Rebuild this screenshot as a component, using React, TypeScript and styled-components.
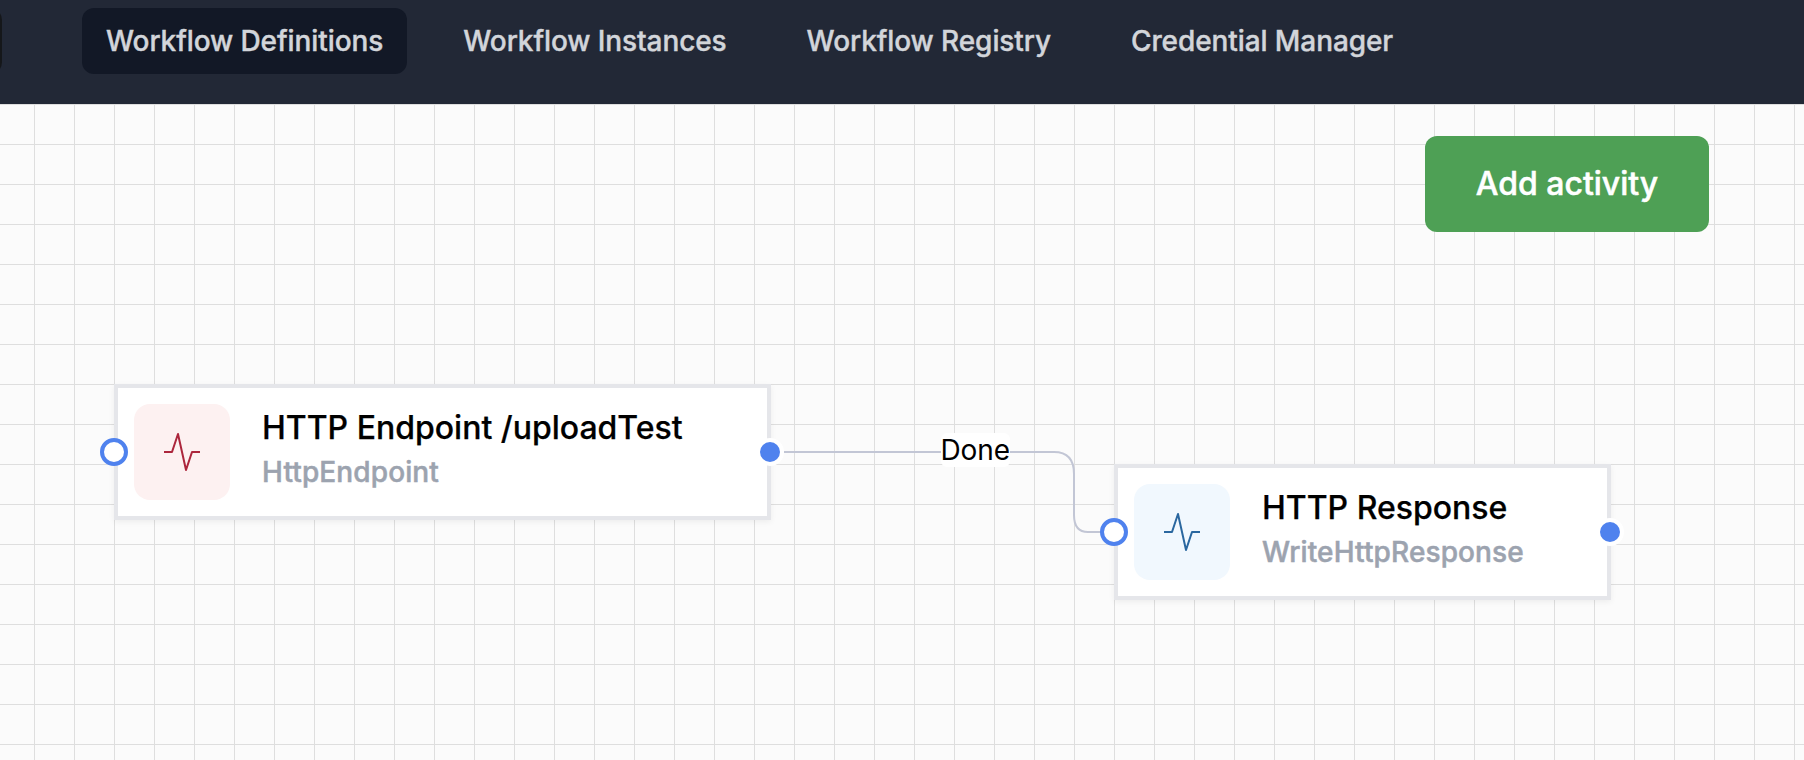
import React from "react";
import styled, { createGlobalStyle } from "styled-components";

const GlobalStyle = createGlobalStyle`
  *, *::before, *::after { box-sizing: border-box; }
  body {
    margin: 0;
    overflow: hidden;
    font-family: Inter, "Liberation Sans", sans-serif;
    -webkit-font-smoothing: antialiased;
  }
`;

const Page = styled.div`
  display: flex;
  flex-direction: column;
  width: 100%;
  height: 100vh;
  overflow: hidden;
`;

const Header = styled.header`
  display: flex;
  flex: none;
  align-items: flex-start;
  height: 104px;
  padding-top: 8px;
  background: #222836;
`;

const LogoTile = styled.div`
  flex: none;
  width: 66px;
  height: 66px;
  margin-left: -64px;
  border-radius: 12px;
  background: #15171a;
`;

const Nav = styled.nav`
  display: flex;
  gap: 32px;
  margin-left: 80px;
`;

const NavItem = styled.a<{ $active?: boolean }>`
  height: 66px;
  padding: 0 24px;
  border-radius: 12px;
  background: ${(p) => (p.$active ? "#121826" : "transparent")};
  color: #d2d5da;
  font-size: 28px;
  font-weight: 500;
  letter-spacing: -0.09px;
  line-height: 66px;
  white-space: nowrap;
  -webkit-text-stroke: 0.4px currentColor;
`;

const Canvas = styled.main`
  position: relative;
  display: flex;
  flex: 1;
  align-items: flex-start;
  justify-content: flex-end;
  padding: 32px 95px 0 0;
  background-color: #fbfbfb;
  background-image:
    linear-gradient(to right, #dedede 1px, transparent 1px),
    linear-gradient(to bottom, #dedede 1px, transparent 1px);
  background-size: 40px 40px;
  background-position: 34px 0;
`;

const AddButton = styled.button`
  width: 284px;
  height: 96px;
  padding: 0;
  border: 0;
  border-radius: 12px;
  background: #4ea055;
  color: #fff;
  font: 500 32px/96px Inter, "Liberation Sans", sans-serif;
  -webkit-text-stroke: 0.5px currentColor;
`;

const Wires = styled.svg`
  position: absolute;
  inset: 0;
  width: 100%;
  height: 100%;
  pointer-events: none;
`;

const WireLabel = styled.span<{ $x: number; $y: number }>`
  position: absolute;
  left: ${(p) => p.$x}px;
  top: ${(p) => p.$y}px;
  height: 34px;
  border-radius: 6px;
  background: #fff;
  color: #000;
  font-size: 28px;
  letter-spacing: -0.1px;
  line-height: 34px;
`;

const Node = styled.section<{ $x: number; $y: number; $w: number }>`
  position: absolute;
  left: ${(p) => p.$x}px;
  top: ${(p) => p.$y}px;
  display: flex;
  gap: 32px;
  width: ${(p) => p.$w}px;
  height: 136px;
  padding: 16px;
  border: 4px solid #e5e6ea;
  background: #fff;
  box-shadow: 0 2px 6px rgba(0, 0, 0, 0.06);
`;

const IconTile = styled.div<{ $bg: string; $fg: string }>`
  display: flex;
  flex: none;
  align-items: center;
  justify-content: center;
  width: 96px;
  height: 96px;
  border-radius: 16px;
  background: ${(p) => p.$bg};
  color: ${(p) => p.$fg};
`;

const NodeText = styled.div`
  display: flex;
  flex-direction: column;
  white-space: nowrap;
`;

const NodeTitle = styled.div`
  color: #000;
  font-size: 32px;
  font-weight: 500;
  line-height: 48px;
  -webkit-text-stroke: 0.25px currentColor;
`;

const NodeType = styled.div`
  color: #9ca3af;
  font-size: 28px;
  font-weight: 500;
  letter-spacing: 0.12px;
  line-height: 40px;
  -webkit-text-stroke: 0.5px currentColor;
`;

const Port = styled.i<{ $side: "in" | "out" }>`
  position: absolute;
  top: 50%;
  ${(p) => (p.$side === "in" ? "left: -18px;" : "right: -17px;")}
  width: 28px;
  height: 28px;
  margin-top: -14px;
  border: 4px solid ${(p) => (p.$side === "in" ? "#4f82ee" : "#fff")};
  border-radius: 50%;
  background: ${(p) => (p.$side === "in" ? "#fff" : "#4f82ee")};
`;

const PulseIcon = () => (
  <svg width="48" height="48" viewBox="0 0 24 24" fill="none" stroke="currentColor" strokeLinejoin="round">
    <path d="M3 12h4l3-9 4 18 3-9h4" />
  </svg>
);

type Activity = {
  title: string;
  type: string;
  x: number;
  y: number;
  w: number;
  bg: string;
  fg: string;
};

const activities: Activity[] = [
  { title: "HTTP Endpoint /uploadTest", type: "HttpEndpoint", x: 114, y: 280, w: 657, bg: "#fdf1f1", fg: "#ac263c" },
  { title: "HTTP Response", type: "WriteHttpResponse", x: 1114, y: 360, w: 497, bg: "#f1f8fe", fg: "#2a679f" },
];

const links = ["Workflow Definitions", "Workflow Instances", "Workflow Registry", "Credential Manager"];

export default function App() {
  return (
    <Page>
      <GlobalStyle />
      <Header>
        <LogoTile />
        <Nav>
          {links.map((label, i) => (
            <NavItem key={label} $active={i === 0}>
              {label}
            </NavItem>
          ))}
        </Nav>
      </Header>
      <Canvas>
        <AddButton>Add activity</AddButton>
        <Wires>
          <path
            d="M784 348H1054Q1074 348 1074 370V411Q1074 428 1088 428H1102"
            fill="none"
            stroke="#c2c6d5"
            strokeWidth="2"
          />
        </Wires>
        <WireLabel $x={940.5} $y={329}>Done</WireLabel>
        {activities.map((a) => (
          <Node key={a.type} $x={a.x} $y={a.y} $w={a.w}>
            <IconTile $bg={a.bg} $fg={a.fg}>
              <PulseIcon />
            </IconTile>
            <NodeText>
              <NodeTitle>{a.title}</NodeTitle>
              <NodeType>{a.type}</NodeType>
            </NodeText>
            <Port $side="in" />
            <Port $side="out" />
          </Node>
        ))}
      </Canvas>
    </Page>
  );
}
